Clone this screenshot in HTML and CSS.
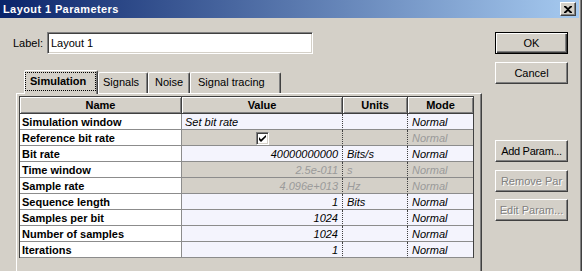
FILE: index.html
```html
<!DOCTYPE html>
<html lang="en">
<head>
    <meta charset="UTF-8">
    <title>Layout 1 Parameters</title>
    <link rel="stylesheet" href="styles.css">
</head>
<body>

    <div class="window">
        <div class="titlebar">
            <span class="title">Layout 1 Parameters</span>
            <button class="close-btn">
                <svg width="8" height="7" viewBox="0 0 8 7"><path d="M0 0h2l2 2 2-2h2v1L5 3.5 8 6v1H6L4 5 2 7H0V6l3-2.5L0 1z" fill="#000"/></svg>
            </button>
        </div>

        <div class="content">
            <div class="main">
                <div class="label-row">
                    <label for="label">Label:</label>
                    <input type="text" id="label" class="text-input" value="Layout 1">
                </div>

                <div class="tabs">
                    <div class="tab tab-active tab-sim"><span class="focus">Simulation</span></div>
                    <div class="tab tab-signals">Signals</div>
                    <div class="tab tab-noise">Noise</div>
                    <div class="tab tab-tracing">Signal tracing</div>
                </div>

                <div class="panel">
                    <div class="grid">
                        <table class="params">
                            <thead>
                                <tr>
                                    <th class="col-name">Name</th>
                                    <th class="col-value">Value</th>
                                    <th class="col-units">Units</th>
                                    <th class="col-mode">Mode</th>
                                </tr>
                            </thead>
                            <tbody id="params">
                                <!-- filled by script -->
                            </tbody>
                        </table>
                    </div>
                </div>
            </div>

            <div class="side">
                <button class="btn btn-default">OK</button>
                <button class="btn btn-cancel">Cancel</button>
                <button class="btn btn-add">Add Param...</button>
                <button class="btn btn-remove" disabled>Remove Par</button>
                <button class="btn btn-edit" disabled>Edit Param...</button>
            </div>
        </div>
    </div>

    <script>
        // name, value, units; edit = false for greyed rows
        const params = [
            { name: 'Simulation window', value: 'Set bit rate', units: '', edit: true, left: true },
            { name: 'Reference bit rate', check: true, units: '', edit: false },
            { name: 'Bit rate', value: '40000000000', units: 'Bits/s', edit: true },
            { name: 'Time window', value: '2.5e-011', units: 's', edit: false },
            { name: 'Sample rate', value: '4.096e+013', units: 'Hz', edit: false },
            { name: 'Sequence length', value: '1', units: 'Bits', edit: true },
            { name: 'Samples per bit', value: '1024', units: '', edit: true },
            { name: 'Number of samples', value: '1024', units: '', edit: true },
            { name: 'Iterations', value: '1', units: '', edit: true }
        ];

        function mostrarParams() {
            const tbody = document.getElementById('params');
            tbody.innerHTML = '';

            params.forEach(p => {
                const row = document.createElement('tr');
                row.className = p.edit ? 'row-edit' : 'row-off';
                let valueCell;
                if (p.check) {
                    valueCell = `<td class="col-value cell-check"><span class="checkbox"><svg width="7" height="7" viewBox="0 0 7 7"><path d="M0 2v3l2 2 5-5V0L2 4.5z" fill="#000"/></svg></span></td>`;
                } else {
                    valueCell = `<td class="col-value ${p.left ? 'left' : ''}">${p.value}</td>`;
                }
                row.innerHTML = `
                    <td class="col-name">${p.name}</td>
                    ${valueCell}
                    <td class="col-units">${p.units}</td>
                    <td class="col-mode">Normal</td>
                `;
                tbody.appendChild(row);
            });
        }

        mostrarParams();
    </script>
</body>
</html>
```

FILE: styles.css
```css
* {
    box-sizing: border-box;
}

html, body {
    margin: 0;
}

body {
    width: 582px;
    height: 271px;
    overflow: hidden;
    background-color: #d4d0c8;
    font-family: "Liberation Sans", Arial, sans-serif;
    font-size: 11px;
    color: #000;
}

.window {
    height: 271px;
    padding-right: 3px;
    box-shadow: inset -1px 0 #404040, inset -2px 0 #808080;
}

.titlebar {
    height: 18px;
    display: flex;
    align-items: center;
    justify-content: space-between;
    padding: 0 3px 0 3px;
    background: linear-gradient(to right, #0a246a, #a6caf0);
}

    .titlebar .title {
        color: #fff;
        font-weight: bold;
        font-size: 11px;
        letter-spacing: 0.4px;
    }

.close-btn {
    width: 16px;
    height: 14px;
    padding: 0;
    display: flex;
    align-items: center;
    justify-content: center;
    background-color: #d4d0c8;
    border: 1px solid;
    border-color: #fff #404040 #404040 #fff;
    box-shadow: inset -1px -1px #808080;
}

.content {
    display: flex;
}

.main {
    width: 482px;
    padding-top: 14px;
}

.label-row {
    display: flex;
    align-items: center;
    padding-left: 13px;
    gap: 4px;
}

.text-input {
    width: 266px;
    height: 22px;
    margin: 0;
    padding: 0 3px;
    font-family: "Liberation Sans", Arial, sans-serif;
    font-size: 11px;
    background-color: #fff;
    border: 1px solid;
    border-color: #808080 #fff #fff #808080;
    box-shadow: inset 1px 1px #404040, inset -1px -1px #d4d0c8;
    outline: none;
}

.tabs {
    display: flex;
    align-items: flex-end;
    height: 23px;
    margin-top: 16px;
    padding-left: 24px;
}

.tab {
    height: 21px;
    padding-left: 5px;
    line-height: 19px;
    border: 1px solid;
    border-bottom: none;
    border-color: #fff #404040 transparent #fff;
    border-radius: 2px 2px 0 0;
    box-shadow: inset -1px 0 #808080;
    white-space: nowrap;
}

.tab-active {
    position: relative;
    z-index: 1;
    height: 24px;
    margin-bottom: -1px;
    padding: 0;
    font-weight: bold;
    background-color: #d4d0c8;
}

    .tab-active .focus {
        display: block;
        height: 19px;
        margin: 1px 1px 0 0;
        padding-left: 4px;
        line-height: 17px;
        border: 1px dotted #000;
    }

.tab-sim { width: 74px; }
.tab-signals { width: 50px; padding-left: 4px; }
.tab-noise { width: 42px; padding-left: 6px; }
.tab-tracing { width: 91px; padding-left: 7px; }

.panel {
    height: 178px;
    width: 466px;
    margin-left: 16px;
    padding: 2px 0 0 2px;
    border-top: 1px solid #fff;
    border-left: 1px solid #fff;
    border-right: 1px solid #404040;
    box-shadow: inset -1px 0 #808080;
    overflow: hidden;
}

.grid {
    width: 455px;
    border: 1px solid #404040;
    border-bottom: none;
}

.params {
    border-collapse: separate;
    border-spacing: 0;
    table-layout: fixed;
    width: 453px;
}

    .params th, .params td {
        padding: 0 4px;
        white-space: nowrap;
        overflow: hidden;
    }

    .params th {
        height: 17px;
        font-weight: bold;
        text-align: center;
        background-color: #d4d0c8;
        border-right: 1px solid #404040;
        border-bottom: 1px solid #404040;
        box-shadow: inset 1px 1px #fff, inset -1px -1px #808080;
    }

        .params th.col-mode {
            border-right: none;
        }

    .params td {
        height: 16px;
        border-bottom: 1px solid #8c8c8c;
        font-style: italic;
    }

    .params .col-name { width: 162px; }
    .params .col-value { width: 161px; }
    .params .col-units { width: 65px; }
    .params .col-mode { width: 65px; }

    .params td.col-name {
        padding-left: 2px;
        font-weight: bold;
        font-style: normal;
        color: #000;
        background-color: #fff;
        border-right: 1px solid #8c8c8c;
    }

    .params td.col-value {
        text-align: right;
        border-right: 1px dotted #404040;
    }

        .params td.col-value.left {
            text-align: left;
            padding-left: 3px;
        }

    .params td.col-units {
        border-right: 1px dotted #404040;
    }

.row-edit td {
    background-color: #f4f4fd;
}

.row-off td {
    background-color: #d4d0c8;
    color: #9a9a9a;
}

.cell-check {
    text-align: center !important;
}

.checkbox {
    display: inline-flex;
    align-items: center;
    justify-content: center;
    width: 13px;
    height: 13px;
    margin-top: 1px;
    vertical-align: top;
    background-color: #fff;
    border: 1px solid;
    border-color: #808080 #fff #fff #808080;
    box-shadow: inset 1px 1px #404040, inset -1px -1px #d4d0c8;
}

.side {
    display: flex;
    flex-direction: column;
    width: 73px;
    margin-left: 13px;
    padding-top: 14px;
}

.btn {
    height: 22px;
    padding: 0;
    font-family: "Liberation Sans", Arial, sans-serif;
    font-size: 11px;
    color: #000;
    background-color: #d4d0c8;
    border: 1px solid;
    border-color: #fff #404040 #404040 #fff;
    box-shadow: inset -1px -1px #808080;
}

.btn-default {
    border-color: #000;
    box-shadow: inset 1px 1px #fff, inset -1px -1px #404040, inset -2px -2px #808080;
}

.btn-cancel { margin-top: 8px; }
.btn-add { margin-top: 56px; letter-spacing: -0.3px; }
.btn-remove { margin-top: 8px; }
.btn-edit { margin-top: 7px; }

.btn:disabled {
    color: #808080;
    text-shadow: 1px 1px #fff;
}
```
